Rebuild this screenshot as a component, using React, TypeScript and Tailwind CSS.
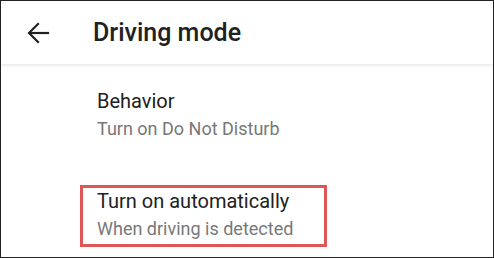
import React from "react";

export default function App() {
  return (
    <div className="w-[494px] h-[258px] box-border border border-[#222] bg-white overflow-hidden relative" style={{ fontFamily: "Roboto, 'Noto Sans', sans-serif" }}>
      <div className="h-[63px] flex items-center relative z-10 bg-white shadow-[0_1px_4px_rgba(0,0,0,0.12)]">
        <div className="w-[92px] flex items-center pl-[25px]">
          <svg width="24" height="24" viewBox="0 0 24 24" fill="none" stroke="#212121" strokeWidth="2.2" strokeLinecap="square">
            <path d="M22 12H4" />
            <path d="M12 3L3 12L12 21" strokeLinejoin="miter" />
          </svg>
        </div>
        <div className="text-[25px] font-medium text-[#212121] leading-none">Driving mode</div>
      </div>
      <div className="pl-[96px] pt-[25px]">
        <div className="text-[20px] text-[#212121] leading-[24px]">Behavior</div>
        <div className="text-[18px] text-[#787878] leading-[22px] mt-[5px]">Turn on Do Not Disturb</div>
      </div>
      <div className="mt-[45px] ml-[79px] w-[247px] h-[62px] border-[3px] border-[#e05555] box-border pl-[14px] pt-[1px]">
        <div className="text-[20px] text-[#212121] leading-[24px]">Turn on automatically</div>
        <div className="text-[18px] text-[#787878] leading-[22px] mt-[5px]">When driving is detected</div>
      </div>
    </div>
  );
}
